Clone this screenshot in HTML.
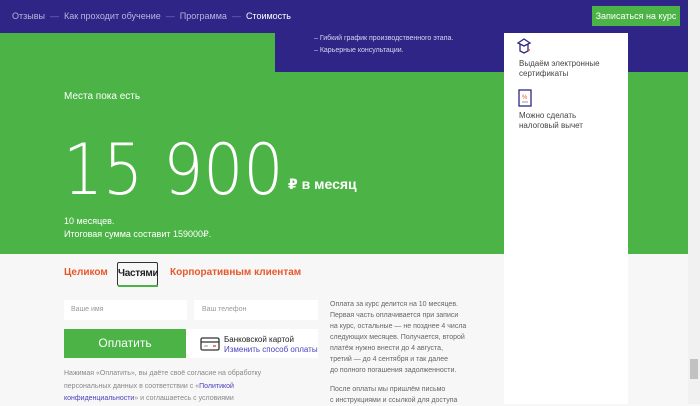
<!DOCTYPE html>
<html><head><meta charset="utf-8"><style>
*{margin:0;padding:0;box-sizing:border-box}
body{width:700px;height:404px;overflow:hidden;background:#f7f7f7;font-family:"Liberation Sans","DejaVu Sans",sans-serif;position:relative}
.a{position:absolute}
</style></head><body>
<div class="a" style="left:0;top:0;width:688px;height:254px;background:#4cb446"></div>
<div class="a" style="left:0;top:0;width:688px;height:33px;background:#2e2586"></div>
<div class="a" style="left:275px;top:0;width:413px;height:72px;background:#2e2586"></div>
<div class="a" style="left:12px;top:11px;font-size:9px;color:#b9b5e0;white-space:nowrap">Отзывы <span style="color:#7a74c0">&nbsp;—&nbsp;</span> Как проходит обучение <span style="color:#7a74c0">&nbsp;—&nbsp;</span> Программа <span style="color:#7a74c0">&nbsp;—&nbsp;</span> <span style="color:#fff">Стоимость</span></div>
<div class="a" style="left:592px;top:6px;width:88px;height:20px;background:#4cb446;color:#fff;font-size:9px;text-align:center;line-height:20px">Записаться на курс</div>
<div class="a" style="left:314px;top:33px;font-size:7px;color:#d8d6f0;line-height:12px">– Гибкий график производственного этапа.<br>– Карьерные консультации.</div>
<div class="a" style="left:504px;top:33px;width:124px;height:371px;background:#fff"></div>
<svg class="a" style="left:516px;top:37px" width="16" height="18" viewBox="0 0 16 18"><path d="M2 6 L8 2 L14 6 L8 9 Z M4 7 V14 L8 16 L12 14 V7" fill="none" stroke="#2e2586" stroke-width="1.3"/><circle cx="13" cy="13" r="1" fill="#e8572a"/></svg>
<div class="a" style="left:519px;top:59px;font-size:8px;color:#444;line-height:10px">Выдаём электронные<br>сертификаты</div>
<svg class="a" style="left:518px;top:89px" width="14" height="18" viewBox="0 0 14 18"><rect x="1" y="1" width="12" height="16" fill="none" stroke="#2e2586" stroke-width="1.3"/><text x="4" y="10" font-size="6" fill="#e8572a">%</text><path d="M4 13h6" stroke="#999"/></svg>
<div class="a" style="left:519px;top:111px;font-size:8px;color:#444;line-height:10px">Можно сделать<br>налоговый вычет</div>
<div class="a" style="left:64px;top:91px;font-size:10px;color:#fff">Места пока есть</div>
<div class="a" style="left:63px;top:132px;font-family:'DejaVu Sans',sans-serif;font-weight:200;font-size:70px;color:#fff;line-height:76px;white-space:nowrap;transform:scaleX(0.9);transform-origin:0 0">15 900</div>
<div class="a" style="left:288px;top:176px;font-size:14px;color:#fff;font-weight:bold">₽ в месяц</div>
<div class="a" style="left:64px;top:215px;font-size:9px;color:#fff;line-height:13px">10 месяцев.<br>Итоговая сумма составит 159000₽.</div>
<div class="a" style="left:64px;top:267px;font-size:10px;color:#e8572a;font-weight:bold">Целиком</div>
<div class="a" style="left:117px;top:262px;width:41px;height:24px;border:1px solid #333;border-radius:2px;font-size:10px;font-weight:bold;color:#222;line-height:22px;text-align:center;letter-spacing:-0.3px">Частями</div>
<div class="a" style="left:118px;top:285px;width:40px;height:2px;background:#4cb446"></div>
<div class="a" style="left:170px;top:267px;font-size:10px;color:#e8572a;font-weight:bold">Корпоративным клиентам</div>
<div class="a" style="left:64px;top:300px;width:123px;height:20px;background:#fff;font-size:7px;color:#999;padding-left:7px;line-height:20px">Ваше имя</div>
<div class="a" style="left:194px;top:300px;width:124px;height:20px;background:#fff;font-size:7px;color:#999;padding-left:8px;line-height:20px">Ваш телефон</div>
<div class="a" style="left:64px;top:329px;width:122px;height:29px;background:#4cb446;color:#fff;font-size:12px;text-align:center;line-height:29px">Оплатить</div>
<div class="a" style="left:186px;top:329px;width:132px;height:29px;background:#fff"></div>
<svg class="a" style="left:200px;top:337px" width="20" height="14" viewBox="0 0 20 14"><rect x="1" y="1" width="18" height="12" rx="1.5" fill="none" stroke="#333" stroke-width="1.3"/><path d="M1 5h18" stroke="#333" stroke-width="1.3"/><path d="M4 9h4" stroke="#999"/><path d="M13 9h3" stroke="#e8572a" stroke-width="1.5"/></svg>
<div class="a" style="left:224px;top:335px;font-size:8px;color:#222;line-height:10px">Банковской картой<br><span style="color:#4a3fbf">Изменить способ оплаты</span></div>
<div class="a" style="left:64px;top:368px;font-size:7px;color:#888;line-height:12.5px">Нажимая «Оплатить», вы даёте своё согласие на обработку<br>персональных данных в соответствии с «<span style="color:#4a3fbf">Политикой</span><br><span style="color:#4a3fbf">конфиденциальности</span>» и соглашаетесь с условиями</div>
<div class="a" style="left:330px;top:299px;font-size:7px;color:#666;line-height:11px">Оплата за курс делится на 10 месяцев.<br>Первая часть оплачивается при записи<br>на курс, остальные — не позднее 4 числа<br>следующих месяцев. Получается, второй<br>платёж нужно внести до 4 августа,<br>третий — до 4 сентября и так далее<br>до полного погашения задолженности.</div>
<div class="a" style="left:330px;top:384px;font-size:7px;color:#666;line-height:11px">После оплаты мы пришлём письмо<br>с инструкциями и ссылкой для доступа</div>
<div class="a" style="left:688px;top:0;width:12px;height:404px;background:#f1f1f1"></div>
<div class="a" style="left:690px;top:359px;width:8px;height:20px;background:#c1c1c1"></div>
</body></html>
